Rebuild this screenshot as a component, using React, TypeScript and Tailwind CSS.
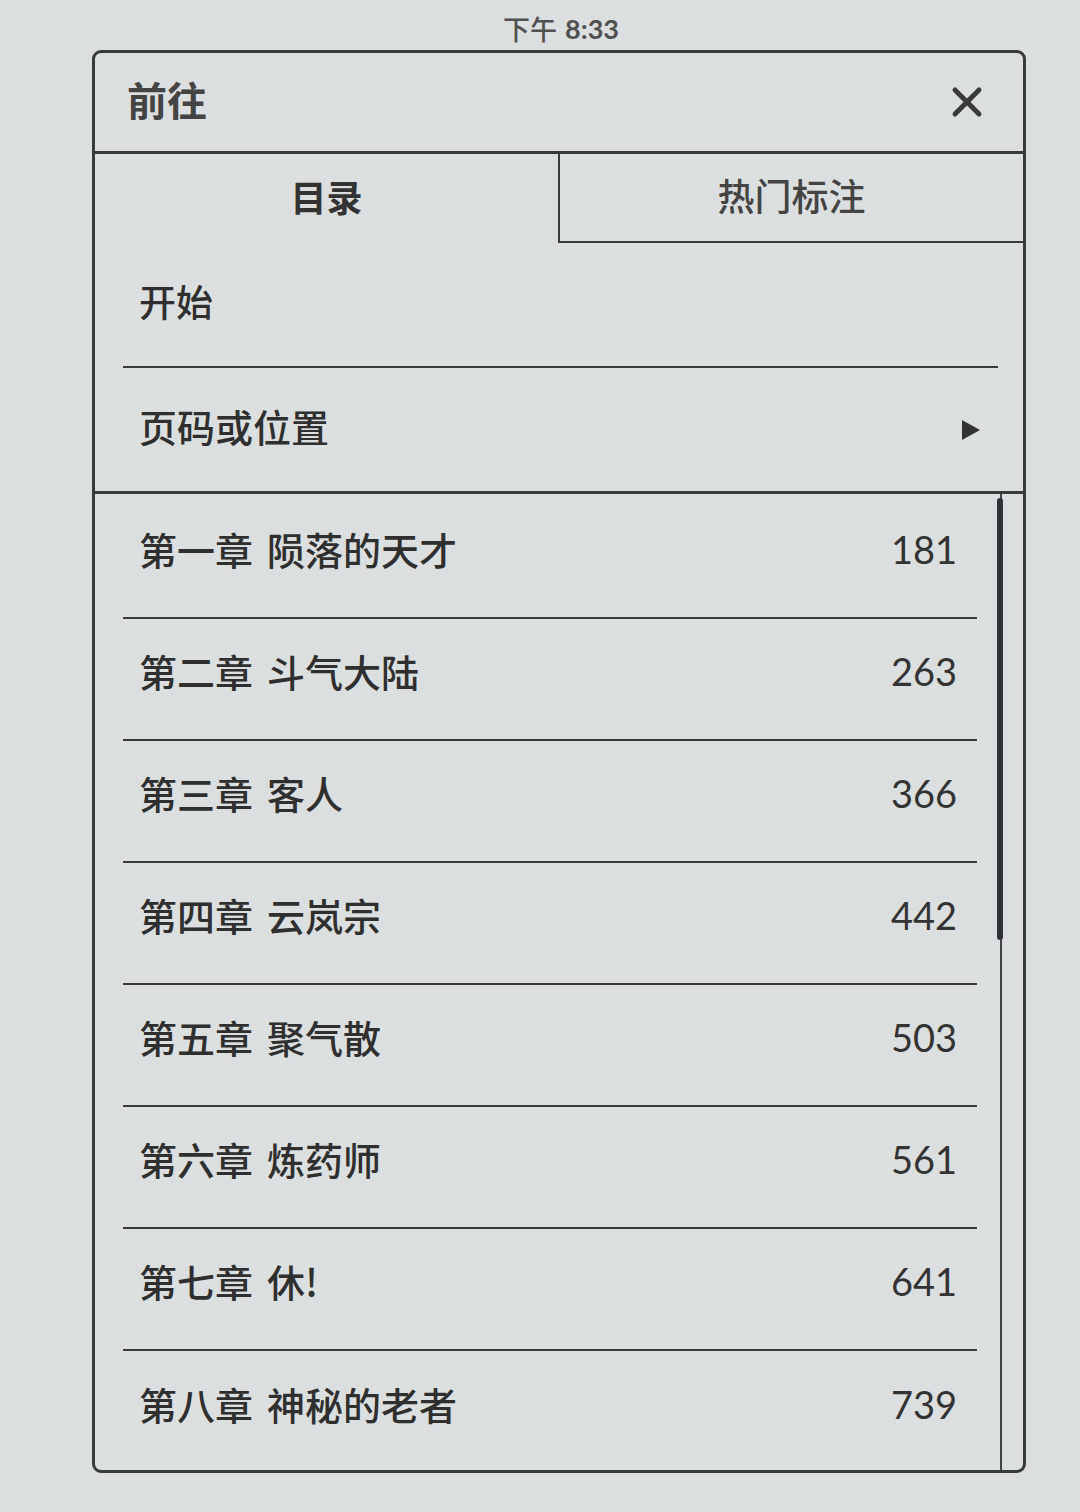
import React from "react";

const chapters = [
  { t: "第一章 陨落的天才", p: "181" },
  { t: "第二章 斗气大陆", p: "263" },
  { t: "第三章 客人", p: "366" },
  { t: "第四章 云岚宗", p: "442" },
  { t: "第五章 聚气散", p: "503" },
  { t: "第六章 炼药师", p: "561" },
  { t: "第七章 休!", p: "641" },
  { t: "第八章 神秘的老者", p: "739" },
];

const cjk = { fontFamily: '"Noto Sans CJK SC", "Noto Sans", sans-serif' };
const num = { fontFamily: 'Lato, "Noto Sans", sans-serif' };

export default function App() {
  return (
    <div className="w-[1080px] h-[1512px] bg-[#dcdfdf] flex flex-col overflow-hidden text-[#2f2f2f]" style={cjk}>
      <div className="h-[50px] flex items-center justify-center pl-[42px] pt-[6px] text-[27px] font-medium text-[#505050] leading-none">
        下午 <span className="ml-[8px] font-bold" style={num}>8:33</span>
      </div>
      <div className="ml-[92px] w-[934px] h-[1423px] border-[3px] border-[#3a3a3a] rounded-[9px] flex flex-col overflow-hidden">
        <div className="h-[101px] shrink-0 border-b-[3px] border-[#3a3a3a] flex items-center justify-between pl-[32px] pr-[40px] pb-[6px]">
          <span className="text-[40px] font-bold text-[#444] leading-none">前往</span>
          <svg width="32" height="32" viewBox="0 0 32 32" className="mt-[6px]">
            <path d="M4 4 L28 28 M28 4 L4 28" stroke="#3a3a3a" strokeWidth="5" strokeLinecap="round" />
          </svg>
        </div>
        <div className="h-[89px] shrink-0 flex">
          <div className="w-[463px] flex items-center justify-center pb-[5px] text-[36px] font-bold text-[#333] leading-none">目录</div>
          <div className="flex-1 border-l-2 border-b-2 border-[#3a3a3a] flex items-center justify-center pb-[4px] text-[37px] font-medium text-[#444] leading-none">热门标注</div>
        </div>
        <div className="h-[125px] shrink-0 mx-[28px] mr-[25px] border-b-2 border-[#3a3a3a] flex items-center pl-[16px] pb-[6px] text-[37px] font-medium leading-none">开始</div>
        <div className="h-[126px] shrink-0 border-b-[3px] border-[#3a3a3a] flex items-center justify-between pl-[44px] pr-[42px] text-[38px] font-medium leading-none">
          <span className="mb-[8px]">页码或位置</span>
          <svg width="20" height="22" viewBox="0 0 20 22">
            <polygon points="1,1 19,11 1,21" fill="#333" />
          </svg>
        </div>
        <div className="relative flex-1 flex flex-col pt-[3px]">
          {chapters.map((c, i) => {
            const [a, b] = c.t.split(" ");
            return (
              <div
                key={i}
                className={
                  "h-[122px] shrink-0 ml-[28px] mr-[46px] flex items-center justify-between pl-[16px] pr-[20px] pb-[16px] " +
                  (i < chapters.length - 1 ? "border-b-2 border-[#3a3a3a]" : "")
                }
              >
                <span className="text-[38px] font-medium leading-none flex gap-[14px]">
                  <span>{a}</span>
                  <span>{b}</span>
                </span>
                <span className="text-[38px] leading-none text-[#333]" style={num}>{c.p}</span>
              </div>
            );
          })}
          <div className="absolute left-[905px] top-0 bottom-0 w-[2px] bg-[#444]" />
          <div className="absolute left-[902px] top-[4px] h-[442px] w-[6px] rounded-full bg-[#2f3338]" />
        </div>
      </div>
    </div>
  );
}
